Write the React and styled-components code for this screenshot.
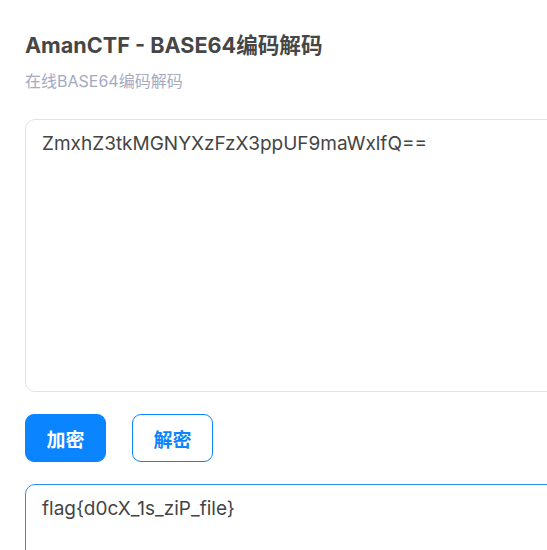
import React, { useRef, useEffect } from "react";
import styled, { createGlobalStyle } from "styled-components";

const Global = createGlobalStyle`
  html, body { margin: 0; padding: 0; background: #fff; overflow: hidden; }
  body { font-family: Inter, "Noto Sans CJK SC", sans-serif; }
`;

const Page = styled.div`
  padding: 29px 0 0 25px;
  width: 600px;
  height: 550px;
  box-sizing: border-box;
  overflow: hidden;
`;

const Title = styled.h1`
  margin: 0;
  font-size: 21.6px;
  line-height: 32px;
  font-weight: 700;
  color: #464646;
`;

const Sub = styled.p`
  margin: 10px 0 0;
  font-size: 16px;
  line-height: 20px;
  color: #a3aac2;
`;

const Area = styled.textarea`
  display: block;
  box-sizing: border-box;
  width: 580px;
  height: ${(p) => p.$h}px;
  margin-top: ${(p) => p.$mt}px;
  padding: 11px 16px;
  font-family: Inter, "Noto Sans CJK SC", sans-serif;
  font-size: 19px;
  line-height: 26px;
  color: #444;
  caret-color: #222;
  border: 1px solid ${(p) => (p.$active ? "#2d8cf0" : "#e3e3e3")};
  border-radius: 10px;
  resize: none;
  outline: none;
  background: #fff;
`;

const Actions = styled.div`
  display: flex;
  gap: 26px;
  margin-top: 22px;
`;

const Btn = styled.button`
  width: 81px;
  height: 48px;
  box-sizing: border-box;
  border-radius: 9px;
  font-family: Inter, "Noto Sans CJK SC", sans-serif;
  font-size: 19px;
  font-weight: 700;
  cursor: pointer;
  border: 1px solid #0a84ff;
  background: ${(p) => (p.$primary ? "#0a84ff" : "#fff")};
  color: ${(p) => (p.$primary ? "#fff" : "#0a84ff")};
`;

export default function App() {
  const ref = useRef(null);
  useEffect(() => {
    const el = ref.current;
    if (el) {
      el.focus();
      const n = el.value.length;
      el.setSelectionRange(n, n);
    }
  }, []);
  return (
    <Page>
      <Global />
      <Title>AmanCTF - BASE64编码解码</Title>
      <Sub>在线BASE64编码解码</Sub>
      <Area $h={273} $mt={28} defaultValue="ZmxhZ3tkMGNYXzFzX3ppUF9maWxlfQ==" />
      <Actions>
        <Btn $primary>加密</Btn>
        <Btn>解密</Btn>
      </Actions>
      <Area ref={ref} $h={120} $mt={22} $active defaultValue="flag{d0cX_1s_ziP_file}" />
    </Page>
  );
}
